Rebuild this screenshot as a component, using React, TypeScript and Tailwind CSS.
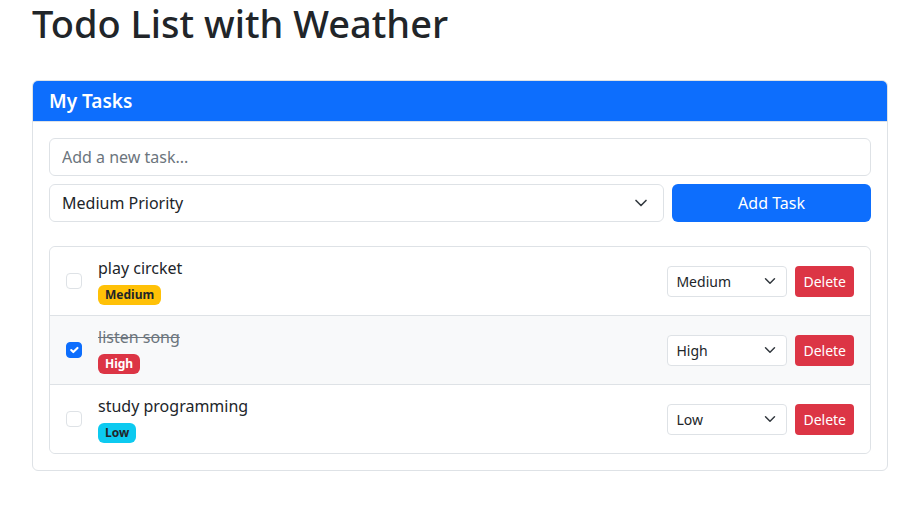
import { useState } from "react";

type Priority = "Low" | "Medium" | "High";

interface Task {
  id: number;
  text: string;
  done: boolean;
  priority: Priority;
}

const BADGE: Record<Priority, string> = {
  High: "bg-[#dc3545] text-white",
  Medium: "bg-[#ffc107] text-[#212529]",
  Low: "bg-[#0dcaf0] text-[#212529]",
};

const CHEVRON =
  "url(\"data:image/svg+xml,%3csvg xmlns='http://www.w3.org/2000/svg' viewBox='0 0 16 16'%3e%3cpath fill='none' stroke='%23343a40' stroke-linecap='round' stroke-linejoin='round' stroke-width='2' d='m2 5 6 6 6-6'/%3e%3c/svg%3e\")";

function Chevron() {
  return (
    <svg width="14" height="10" viewBox="0 2 16 12" fill="none" className="pointer-events-none">
      <path d="m2 5 6 6 6-6" stroke="#343a40" strokeWidth="2" strokeLinecap="round" strokeLinejoin="round" />
    </svg>
  );
}

function CheckBox({ checked }: { checked: boolean }) {
  return (
    <span
      className={`flex h-4 w-4 shrink-0 items-center justify-center rounded-[4px] border ${
        checked ? "border-[#0d6efd] bg-[#0d6efd]" : "border-[#dee2e6] bg-white"
      }`}
    >
      {checked && (
        <svg width="16" height="16" viewBox="0 0 20 20" fill="none">
          <path d="m6 10 3 3 6-6" stroke="#fff" strokeWidth="3" strokeLinecap="round" strokeLinejoin="round" />
        </svg>
      )}
    </span>
  );
}

export default function App() {
  const [tasks] = useState<Task[]>([
    { id: 1, text: "play circket", done: false, priority: "Medium" },
    { id: 2, text: "listen song", done: true, priority: "High" },
    { id: 3, text: "study programming", done: false, priority: "Low" },
  ]);

  return (
    <div
      className="min-h-[532px] bg-white pl-8 text-[#212529]"
      style={{ fontFamily: '"Segoe UI", "Noto Sans", "Open Sans", sans-serif' }}
    >
      <h1 className="m-0 mb-[34px] text-[38px] font-medium leading-[46px]">Todo List with Weather</h1>

      <div className="w-[856px] overflow-hidden rounded-[6px] border border-[#dee2e6]">
        <div className="border-b border-[#dee2e6] bg-[#0d6efd] px-4 py-2">
          <h5 className="m-0 text-[19px] font-semibold leading-6 text-white">My Tasks</h5>
        </div>

        <div className="p-4">
          <input
            type="text"
            placeholder="Add a new task..."
            className="mb-2 block h-[38px] w-full rounded-[6px] border border-[#dee2e6] px-3 text-[16px] outline-none placeholder:text-[#6c757d]"
          />
          <div className="flex gap-2">
            <div className="flex h-[38px] flex-1 items-center rounded-[6px] border border-[#dee2e6] pl-3 pr-[15px] text-[16px]">
              <span className="flex-1">Medium Priority</span>
              <Chevron />
            </div>
            <button className="h-[38px] w-[199px] rounded-[6px] bg-[#0d6efd] text-[16px] text-white">
              Add Task
            </button>
          </div>

          <ul className="mt-6 rounded-[6px] border border-[#dee2e6]">
            {tasks.map((t, i) => (
              <li
                key={t.id}
                className={`flex h-[68px] items-center px-4 ${i > 0 ? "h-[69px] border-t border-[#dee2e6]" : ""} ${
                  t.done ? "bg-[#f8f9fa]" : "bg-white"
                } ${i === 0 ? "rounded-t-[6px]" : ""} ${i === tasks.length - 1 ? "rounded-b-[6px]" : ""}`}
              >
                <CheckBox checked={t.done} />
                <div className="ml-4 flex-1 -mt-[1px]">
                  <div
                    className={`text-[16px] leading-6 ${t.done ? "text-[#6c757d] line-through" : "text-[#212529]"}`}
                  >
                    {t.text}
                  </div>
                  <span
                    className={`mt-[5px] inline-block rounded-[6px] px-[7px] py-[4px] text-[12px] font-bold leading-3 ${BADGE[t.priority]}`}
                  >
                    {t.priority}
                  </span>
                </div>
                <div
                  className="flex h-[31px] w-[120px] items-center rounded-[4px] border border-[#dee2e6] bg-white bg-no-repeat pl-2 text-[14px]"
                  style={{ backgroundImage: CHEVRON, backgroundPosition: "right 8px center", backgroundSize: "16px 12px" }}
                >
                  {t.priority}
                </div>
                <button className="ml-2 h-[31px] rounded-[4px] bg-[#dc3545] px-2 text-[14px] text-white">Delete</button>
              </li>
            ))}
          </ul>
        </div>
      </div>
    </div>
  );
}
